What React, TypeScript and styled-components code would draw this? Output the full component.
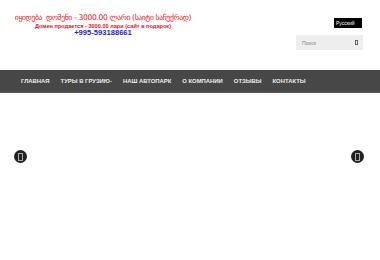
import React from "react";
import styled, { createGlobalStyle } from "styled-components";

const Global = createGlobalStyle`
  html, body { margin: 0; padding: 0; background: #fff; }
  body { font-family: "Liberation Sans", Arial, sans-serif; width: 380px; height: 260px; overflow: hidden; }
`;

const Page = styled.div`
  width: 380px;
  height: 260px;
  display: flex;
  flex-direction: column;
`;

const Header = styled.header`
  height: 70px;
  display: flex;
  justify-content: space-between;
  align-items: flex-start;
  padding: 0 17px 0 0;
`;

const Brand = styled.div`
  width: 206px;
  padding-top: 13px;
  display: flex;
  flex-direction: column;
  align-items: center;
  text-align: center;
`;

const Line = styled.div<{ $size: number; $color: string; $lh: number; $georgian?: boolean }>`
  font-family: ${p => (p.$georgian ? `"DejaVu Sans", sans-serif` : `"Liberation Sans", Arial, sans-serif`)};
  font-size: ${p => p.$size}px;
  line-height: ${p => p.$lh}px;
  color: ${p => p.$color};
  font-weight: ${p => (p.$georgian ? "normal" : "bold")};
  letter-spacing: ${p => (p.$georgian ? "-0.35px" : "normal")};
  white-space: pre;
`;

const Tools = styled.div`
  padding-top: 18px;
  display: flex;
  flex-direction: column;
  align-items: flex-end;
  gap: 7px;
`;

const LangButton = styled.div`
  background: #000;
  color: #fff;
  font-size: 5px;
  height: 10px;
  line-height: 10px;
  width: 28px;
  padding-left: 2px;
  box-sizing: border-box;
  margin-right: 1px;
`;

const Search = styled.div`
  width: 67px;
  height: 15px;
  background: #eeeeee;
  display: flex;
  align-items: center;
  justify-content: space-between;
  padding: 0 5px 0 6px;
  box-sizing: border-box;
  font-size: 5px;
  color: #888;
`;

const Nav = styled.nav`
  height: 22px;
  background: #474747;
  border-bottom: 1px solid #5c5c5c;
  display: flex;
  align-items: center;
  padding-left: 21px;
  gap: 11px;
`;

const NavItem = styled.a`
  color: #eeeeee;
  font-family: "Liberation Sans", Arial, sans-serif;
  font-weight: bold;
  font-size: 5.9px;
  text-transform: uppercase;
  text-decoration: none;
  white-space: nowrap;
`;

const Slider = styled.div`
  flex: 1;
  display: flex;
  justify-content: space-between;
  align-items: flex-start;
  padding: 57px 16px 0 14px;
`;

const Arrow = styled.div`
  width: 13px;
  height: 13px;
  border-radius: 50%;
  background: #222;
  display: flex;
  align-items: center;
  justify-content: center;
`;

const Glyph = styled.div`
  width: 3px;
  height: 6px;
  border: 1px solid #aaa;
`;

const items = ["Главная", "Туры в Грузию-", "Наш автопарк", "О компании", "Отзывы", "Контакты"];

export default function App() {
  return (
    <Page>
      <Global />
      <Header>
        <Brand>
          <Line $georgian $size={7.6} $lh={10} $color="#ee1111">იყიდება  დომენი - 3000.00 ლარი (საიტი საჩუქრად)</Line>
          <Line $size={5.6} $lh={6} $color="#ee1111">Домен продается - 3000.00 лари (сайт в подарок)</Line>
          <Line $size={7.6} $lh={8} $color="#2222dd">+995-593188661</Line>
        </Brand>
        <Tools>
          <LangButton>Русский</LangButton>
          <Search>
            <span>Поиск</span>
            <svg width="3" height="5" viewBox="0 0 3 5"><rect x="0.5" y="0.5" width="2" height="4" fill="none" stroke="#666" strokeWidth="1" /></svg>
          </Search>
        </Tools>
      </Header>
      <Nav>
        {items.map(i => <NavItem key={i}>{i}</NavItem>)}
      </Nav>
      <Slider>
        <Arrow><Glyph /></Arrow>
        <Arrow><Glyph /></Arrow>
      </Slider>
    </Page>
  );
}
